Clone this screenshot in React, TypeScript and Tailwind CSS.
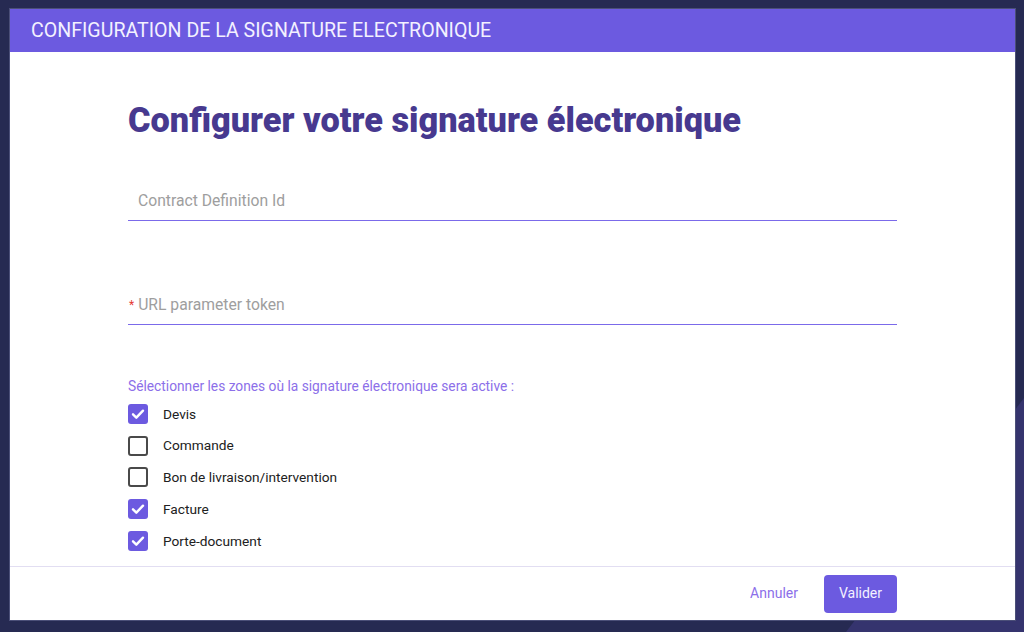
import React from "react";

const items = [
  { label: "Devis", checked: true },
  { label: "Commande", checked: false },
  { label: "Bon de livraison/intervention", checked: false },
  { label: "Facture", checked: true },
  { label: "Porte-document", checked: true },
];

function Box({ checked }: { checked: boolean }) {
  if (checked) {
    return (
      <span className="flex h-[20px] w-[20px] items-center justify-center rounded-[3px] bg-[#6c5ae0]">
        <svg width="16" height="16" viewBox="0 0 24 24" fill="none">
          <path d="M4.5 12.5l5 5L19.5 7" stroke="white" strokeWidth="3.6" strokeLinecap="round" strokeLinejoin="round" />
        </svg>
      </span>
    );
  }
  return <span className="block h-[20px] w-[20px] rounded-[3px] border-2 border-[#4a4a4a] bg-white" />;
}

export default function App() {
  return (
    <div className="relative h-[632px] w-[1024px] overflow-hidden bg-[#262a52]" style={{ fontFamily: "Roboto, 'Noto Sans', sans-serif" }}>
      <svg className="absolute inset-0" width="1024" height="632" viewBox="0 0 1024 632">
        <polygon points="1024,398 1024,632 846,632" fill="#35346e" />
      </svg>
      <div className="relative pl-[10px] pt-[9px]">
        <div className="flex h-[611px] w-[1005px] flex-col bg-white shadow-[0_0_0_1px_#4b4f78]">
          <div className="flex h-[43px] items-center bg-[#6c5ae0] px-[21px]">
            <span className="text-[19.6px] text-[#f3f1ff]">CONFIGURATION DE LA SIGNATURE ELECTRONIQUE</span>
          </div>
          <div className="flex-1 px-[118px] pt-[49px]">
            <h1 className="text-[34.3px] font-black leading-[38px] text-[#47398f]">Configurer votre signature électronique</h1>
            <div className="mt-[43px] flex h-[39px] items-center border-b border-[#7b6aea] pl-[10px]">
              <span className="text-[15.7px] text-[#9e9e9e]">Contract Definition Id</span>
            </div>
            <div className="mt-[64px] flex h-[40px] items-center border-b border-[#7b6aea] pl-[1px]">
              <span className="mr-[4px] text-[12px] text-[#e53935]">*</span>
              <span className="text-[15.7px] text-[#9e9e9e]">URL parameter token</span>
            </div>
            <div className="mt-[51px] text-[13.75px] leading-[20px] text-[#8c6fe9]">
              Sélectionner les zones où la signature électronique sera active :
            </div>
            <div className="mt-[2px] flex flex-col">
              {items.map((it) => (
                <div key={it.label} className="flex h-[31.75px] items-center gap-[15px]">
                  <Box checked={it.checked} />
                  <span className="text-[13.7px] text-[#212121]">{it.label}</span>
                </div>
              ))}
            </div>
          </div>
          <div className="flex h-[54px] items-center justify-end gap-[26px] border-t border-[#e2def2] pr-[118px]">
            <span className="text-[14px] text-[#8c6fe9]">Annuler</span>
            <span className="flex h-[38px] w-[73px] items-center justify-center rounded-[4px] bg-[#6c5ae0] text-[14px] text-[#f3f1ff]">Valider</span>
          </div>
        </div>
      </div>
    </div>
  );
}
